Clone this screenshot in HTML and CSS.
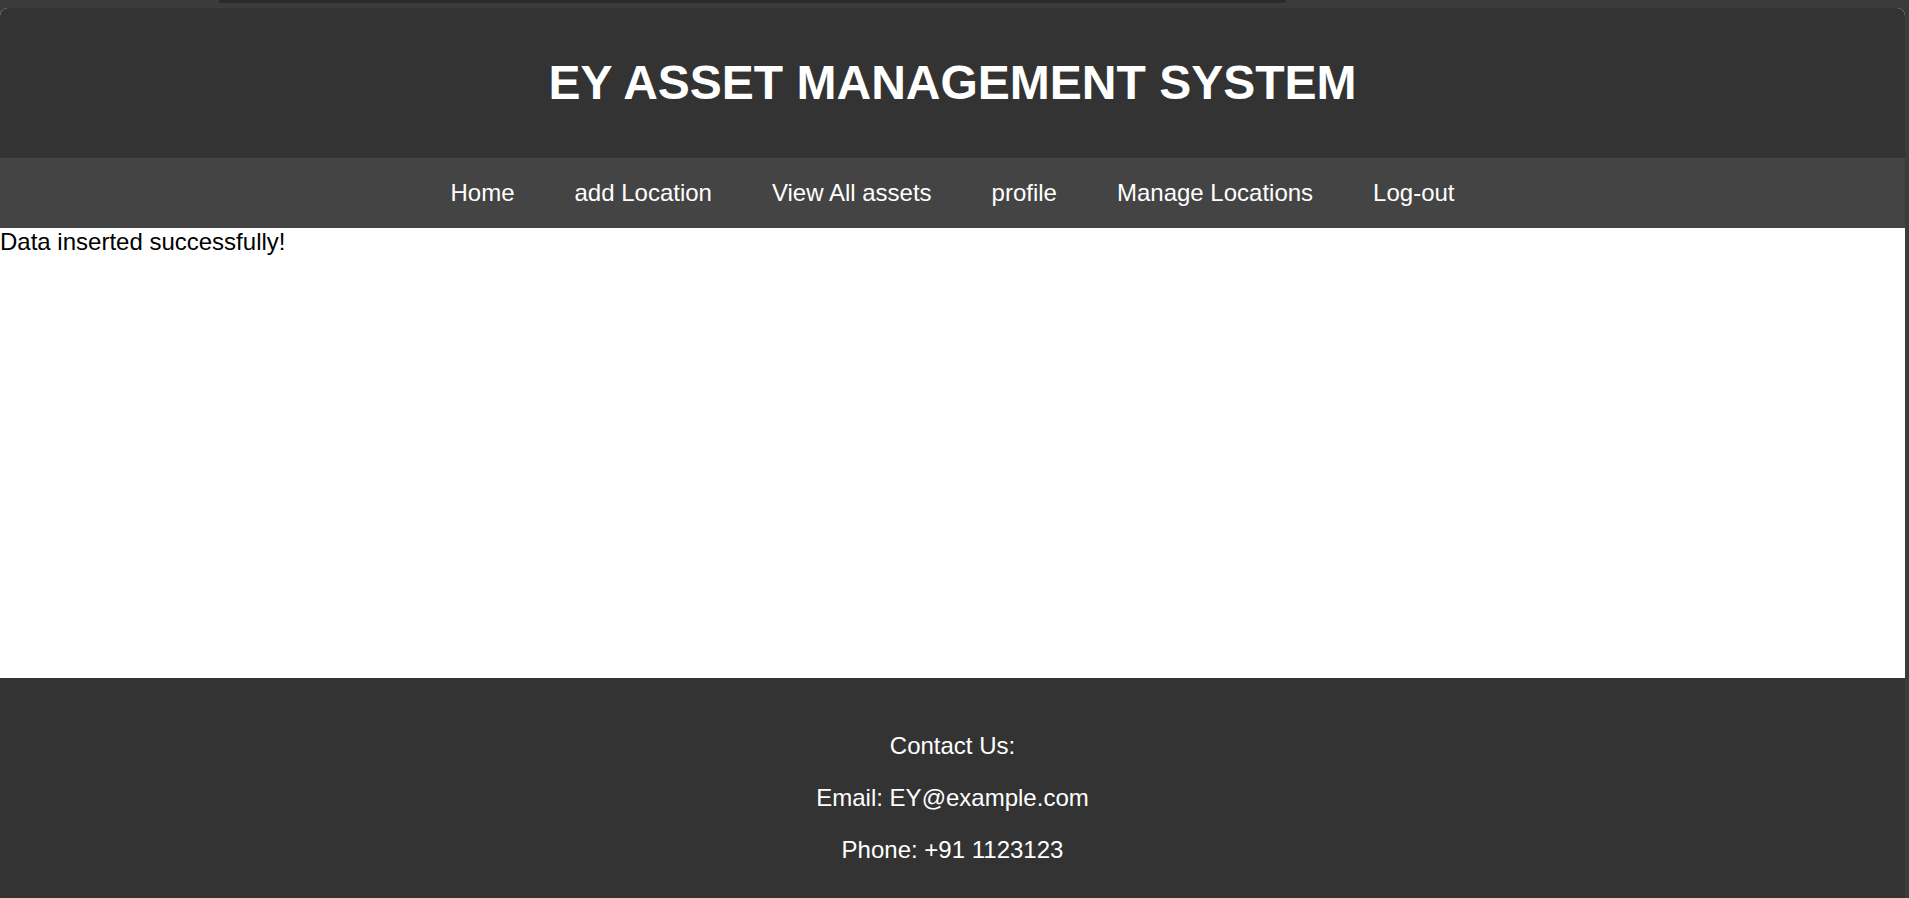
FILE: index.html
```html
<!DOCTYPE html>
<html lang="en">
<head>
<meta charset="utf-8">
<title>EY Asset Management System</title>
<link rel="stylesheet" href="styles.css">
</head>
<body>
<div class="frame-tab"></div>
<div class="page">
  <header class="site-header">
    <h1 class="site-title">EY ASSET MANAGEMENT SYSTEM</h1>
  </header>
  <nav class="site-nav">
    <a href="#" class="nav-link">Home</a>
    <a href="#" class="nav-link">add Location</a>
    <a href="#" class="nav-link">View All assets</a>
    <a href="#" class="nav-link">profile</a>
    <a href="#" class="nav-link">Manage Locations</a>
    <a href="#" class="nav-link">Log-out</a>
  </nav>
  <main class="content">Data inserted successfully!</main>
  <footer class="site-footer">
    <p class="footer-line">Contact Us:</p>
    <p class="footer-line">Email: EY@example.com</p>
    <p class="footer-line">Phone: +91 1123123</p>
  </footer>
</div>
</body>
</html>
```
FILE: styles.css
```css
html, body {
  margin: 0;
  padding: 0;
}
body {
  background: #3b3b3b;
  font-family: "Liberation Sans", Arial, sans-serif;
  font-size: 24px;
  color: #000;
  height: 898px;
  overflow: hidden;
  position: relative;
}
.frame-tab {
  position: absolute;
  top: 0;
  left: 219px;
  width: 1067px;
  height: 3px;
  background: #2a2a2a;
  border-radius: 0 0 4px 4px;
}
.page {
  margin: 8px 4px 0 0;
  border-radius: 8px 8px 0 0;
  overflow: hidden;
  background: #fff;
}
.site-header {
  background: #333;
  color: #fff;
  text-align: center;
  padding: 15px 0;
  height: 120px;
}
.site-title {
  margin: 32px 0 0;
  font-size: 48px;
  font-weight: bold;
  line-height: 55px;
}
.site-nav {
  background: #444;
  height: 70px;
  display: flex;
  justify-content: center;
  align-items: center;
}
.nav-link {
  color: #fff;
  text-decoration: none;
  padding: 0 30px;
  line-height: 28px;
}
.content {
  display: block;
  min-height: 450px;
  background: #fff;
}
.site-footer {
  background: #333;
  color: #fff;
  text-align: center;
  padding: 30px 0;
}
.footer-line {
  margin: 24px 0;
}
```
